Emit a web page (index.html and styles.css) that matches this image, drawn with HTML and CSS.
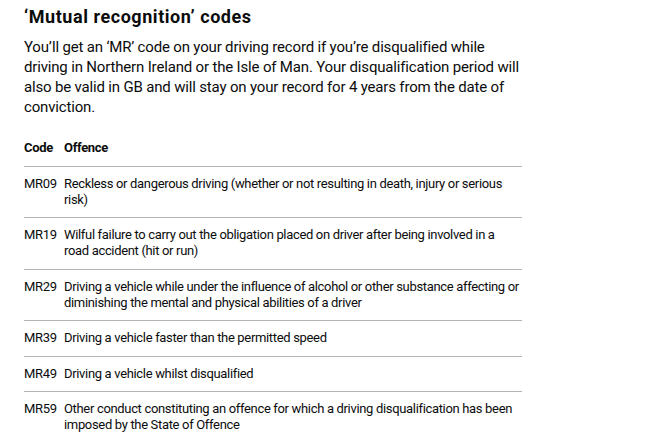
FILE: index.html
```html
<!DOCTYPE html>
<html lang="en">
<head>
<meta charset="utf-8">
<title>Mutual recognition codes</title>
<link rel="stylesheet" href="styles.css">
</head>
<body>
<main class="content">
  <h2 class="heading">‘Mutual recognition’ codes</h2>
  <p class="body">You’ll get an ‘MR’ code on your driving record if you’re disqualified while driving in Northern Ireland or the Isle of Man. Your disqualification period will also be valid in GB and will stay on your record for 4 years from the date of conviction.</p>
  <table class="table">
    <thead>
      <tr>
        <th class="cell code">Code</th>
        <th class="cell offence">Offence</th>
      </tr>
    </thead>
    <tbody>
      <tr><td class="cell code">MR09</td><td class="cell offence">Reckless or dangerous driving (whether or not resulting in death, injury or serious risk)</td></tr>
      <tr><td class="cell code">MR19</td><td class="cell offence">Wilful failure to carry out the obligation placed on driver after being involved in a road accident (hit or run)</td></tr>
      <tr><td class="cell code">MR29</td><td class="cell offence">Driving a vehicle while under the influence of alcohol or other substance affecting or diminishing the mental and physical abilities of a driver</td></tr>
      <tr><td class="cell code">MR39</td><td class="cell offence">Driving a vehicle faster than the permitted speed</td></tr>
      <tr><td class="cell code">MR49</td><td class="cell offence">Driving a vehicle whilst disqualified</td></tr>
      <tr><td class="cell code">MR59</td><td class="cell offence">Other conduct constituting an offence for which a driving disqualification has been imposed by the State of Offence</td></tr>
    </tbody>
  </table>
</main>
</body>
</html>
```
FILE: styles.css
```css
html, body {
  margin: 0;
  padding: 0;
  background: #ffffff;
}

body {
  font-family: Roboto, "Liberation Sans", Arial, sans-serif;
  color: #0b0c0c;
}

.content {
  padding: 7px 0 0 24px;
}

.heading {
  margin: 0;
  font-size: 18px;
  line-height: 20px;
  font-weight: 700;
  letter-spacing: 0.55px;
}

.body {
  margin: 10px 0 14px;
  width: 500px;
  font-size: 15px;
  line-height: 20px;
  letter-spacing: -0.17px;
}

.table {
  width: 498px;
  border-collapse: collapse;
  border-spacing: 0;
  font-size: 13px;
  line-height: 16px;
  letter-spacing: -0.33px;
}

.cell {
  padding: 9px 0 9.5px;
  text-align: left;
  vertical-align: top;
  border-bottom: 1px solid #b1b4b6;
}

th.cell {
  font-weight: 700;
}

.code {
  width: 33px;
  padding-right: 7px;
  white-space: nowrap;
}
```
